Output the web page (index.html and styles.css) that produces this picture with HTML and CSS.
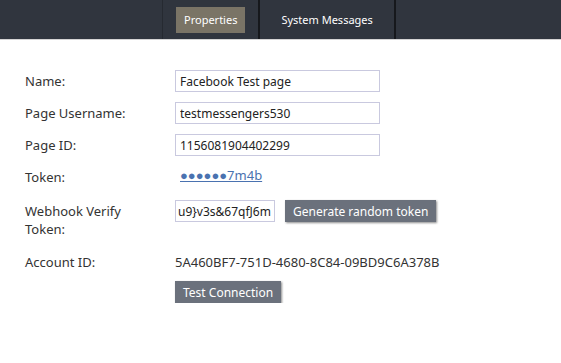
FILE: index.html
```html
<!DOCTYPE html>
<html lang="en">
<head>
  <meta charset="UTF-8" />
  <meta name="viewport" content="width=device-width, initial-scale=1.0" />
  <title>Facebook Channel</title>
  <link rel="stylesheet" href="styles.css">
</head>
<body>
  <div class="topbar">
    <div class="tabs">
      <div class="tab active"><span>Properties</span></div>
      <div class="tab"><span>System Messages</span></div>
    </div>
  </div>

  <div class="form">
    <label class="field-label">Name:</label>
    <div class="field"><input type="text" class="text-input" value="Facebook Test page"></div>

    <label class="field-label">Page Username:</label>
    <div class="field"><input type="text" class="text-input" value="testmessengers530"></div>

    <label class="field-label">Page ID:</label>
    <div class="field"><input type="text" class="text-input" value="1156081904402299"></div>

    <label class="field-label">Token:</label>
    <div class="field token"><a href="#" class="token-link">●●●●●●7m4b</a></div>

    <label class="field-label webhook">Webhook Verify Token:</label>
    <div class="field inline">
      <input type="text" class="text-input short" value="u9}v3s&amp;67qfJ6m">
      <button class="btn">Generate random token</button>
    </div>

    <label class="field-label">Account ID:</label>
    <div class="account-value">5A460BF7-751D-4680-8C84-09BD9C6A378B</div>

    <div></div>
    <div class="field"><button class="btn">Test Connection</button></div>
  </div>
</body>
</html>
```

FILE: styles.css
```css
body {
  margin: 0;
  font-family: "Noto Sans", sans-serif;
  font-size: 13px;
  color: #333;
  background: #fff;
}
.topbar {
  height: 39px;
  background-color: #30353e;
  border-bottom: 1px solid #d4d4d4;
}
.tabs {
  display: flex;
  height: 100%;
  margin-left: 162px;
  border-left: 1px solid #262a31;
}
.tab {
  display: flex;
  align-items: center;
  padding: 0 13px;
  border-right: 2px solid #16181c;
  color: #fff;
  font-size: 11px;
}
.tab span {
  display: block;
  height: 26px;
  line-height: 26px;
  padding: 0 8px;
}
.tab.active span {
  background-color: #7a7466;
}
.form {
  display: grid;
  grid-template-columns: 150px 1fr;
  row-gap: 10px;
  padding: 30px 0 0 25px;
}
.field-label {
  line-height: 18px;
  padding-top: 2px;
  width: 130px;
}
.field {
  display: flex;
  align-items: center;
  min-height: 22px;
}
.field.token {
  align-items: flex-start;
  min-height: 24px;
}
.field.inline {
  align-items: flex-start;
  gap: 10px;
}
.text-input {
  box-sizing: border-box;
  width: 205px;
  height: 22px;
  padding: 0 4px;
  border: 1px solid #c9c9df;
  font-family: inherit;
  font-size: 12px;
  color: #222;
}
.text-input.short {
  width: 100px;
  padding: 0 2px;
}
.token-link {
  color: #4a72b0;
  text-decoration: underline;
  line-height: 18px;
  padding-left: 5px;
  font-size: 13px;
}
.webhook {
  padding-bottom: 3px;
}
.account-value {
  line-height: 18px;
  padding-top: 2px;
  min-height: 18px;
}
.btn {
  height: 22px;
  padding: 0 8px;
  border: none;
  background-color: #6b717c;
  color: #fff;
  font-family: inherit;
  font-size: 12px;
  box-shadow: 1px 1px 2px rgba(0, 0, 0, 0.45);
}
```
